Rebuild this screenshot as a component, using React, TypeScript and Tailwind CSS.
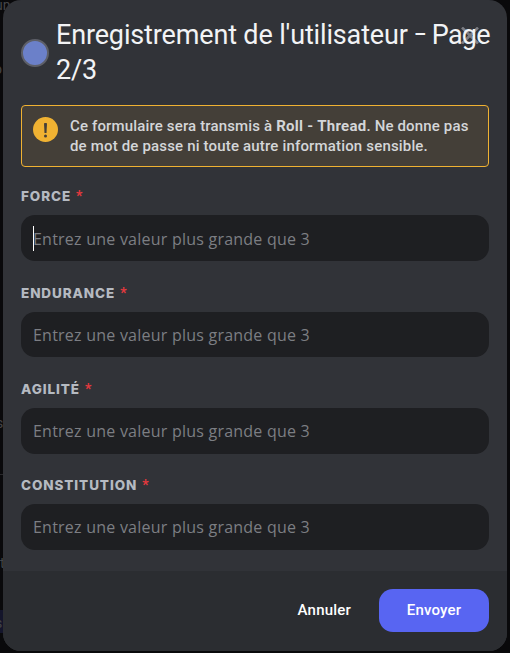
import React from "react";

const fields = ["FORCE", "ENDURANCE", "AGILITÉ", "CONSTITUTION"];

function Field({ label, focused }: { label: string; focused: boolean }) {
  return (
    <div className="h-[96.2px]">
      <label className="flex h-[18px] items-center gap-[5px] text-[#b5bac1]">
        <span className="font-['Inter',sans-serif] text-[13.5px] leading-[18px] font-extrabold tracking-[0.9px]">{label}</span>
        <span className="text-[14px] leading-[16px] font-bold text-[#e5393e]">*</span>
      </label>
      <div className="relative mt-[10px]">
        <input
          placeholder="Entrez une valeur plus grande que 3"
          className="block h-[45.8px] w-full rounded-[14px] bg-[#1e1f22] px-3 pt-px font-['Open_Sans',sans-serif] text-[16px] tracking-[0.23px] text-[#dbdee1] outline-none placeholder:text-[#7c7e83]"
        />
        {focused && <span className="absolute top-[11px] left-3 h-[25px] w-px bg-white" />}
      </div>
    </div>
  );
}

export default function App() {
  return (
    <div className="relative h-[653px] w-[510px] overflow-hidden bg-[#09090b] font-['Roboto',sans-serif]">
      <div className="absolute top-0 left-0 text-[14px] leading-4 text-[#454548]">
        <span className="absolute top-[-3px] left-[-5px]">un</span>
        <span className="absolute top-[61px] left-[-6px]">o</span>
        <span className="absolute top-[415px] left-[-4px]">s</span>
        <span className="absolute top-[474px] left-0 h-px w-3 bg-[#28282b]" />
        <span className="absolute top-[555px] left-0">t</span>
        <span className="absolute top-[610px] left-0 h-[23px] w-3 bg-[#14152b]" />
        <span className="absolute top-[615px] left-[-5px]">s</span>
      </div>

      <main className="relative ml-[3px] flex h-[651px] w-[504px] flex-col overflow-hidden rounded-[18px] bg-[#313338]">
        <header className="flex h-[105px] shrink-0 pl-[18px]">
          <span className="mt-[39px] h-7 w-7 shrink-0 rounded-full border-2 border-[#5d5f68] bg-[#6b80c9]" />
          <h1 className="relative z-10 mt-[18px] ml-[7px] text-[27px] leading-[35px] tracking-[-0.15px] whitespace-nowrap text-[#f2f3f5]">
            Enregistrement de l'utilisateur <span className="inline-block w-[11px] origin-left scale-x-[0.72]">–</span>{" "}
            <span className="tracking-[-0.8px]">Page</span>
            <br />
            2/3
          </h1>
          <svg className="absolute top-[27px] left-[458px] h-[17px] w-[18px] text-[#7b7d83]" viewBox="0 0 18 17" stroke="currentColor" strokeWidth="2.6" fill="none">
            <path d="M1 .5l16 16M17 .5L1 16.5" />
          </svg>
        </header>

        <section className="mx-[18px] flex h-[62px] shrink-0 rounded-[4px] border border-[#f0b232] bg-[#443f38] pt-[10px] pl-[11px]">
          <svg className="mt-px h-[25px] w-[25px] shrink-0" viewBox="0 0 25 25">
            <circle cx="12.5" cy="12.5" r="12.5" fill="#f0b232" />
            <path d="M11 6.2q1.5-.6 3 0l-.5 9.8h-2z" fill="#443f38" />
            <circle cx="12.5" cy="19" r="1.5" fill="#443f38" />
          </svg>
          <p className="ml-3 text-[15px] leading-5 font-medium tracking-[0.15px] whitespace-nowrap text-[#d4d6d8]">
            Ce formulaire sera transmis à <strong className="font-bold tracking-[0.28px]">Roll - Thread</strong>. Ne donne pas
            <br />
            <span className="tracking-[0.17px]">de mot de passe ni toute autre information sensible.</span>
          </p>
        </section>

        <div className="h-[404px] shrink-0 px-[18px] pt-[20.4px]">
          {fields.map((f, i) => (
            <Field key={f} label={f} focused={i === 0} />
          ))}
        </div>

        <footer className="flex h-20 items-start justify-end bg-[#2b2d31] pt-[18px] pr-[18px] text-[15px] font-medium tracking-[0.2px] text-white">
          <button className="mr-7 h-[42px] whitespace-nowrap">Annuler</button>
          <button className="h-[43px] w-[110px] rounded-[14px] bg-[#5865f2]">Envoyer</button>
        </footer>
      </main>
    </div>
  );
}
